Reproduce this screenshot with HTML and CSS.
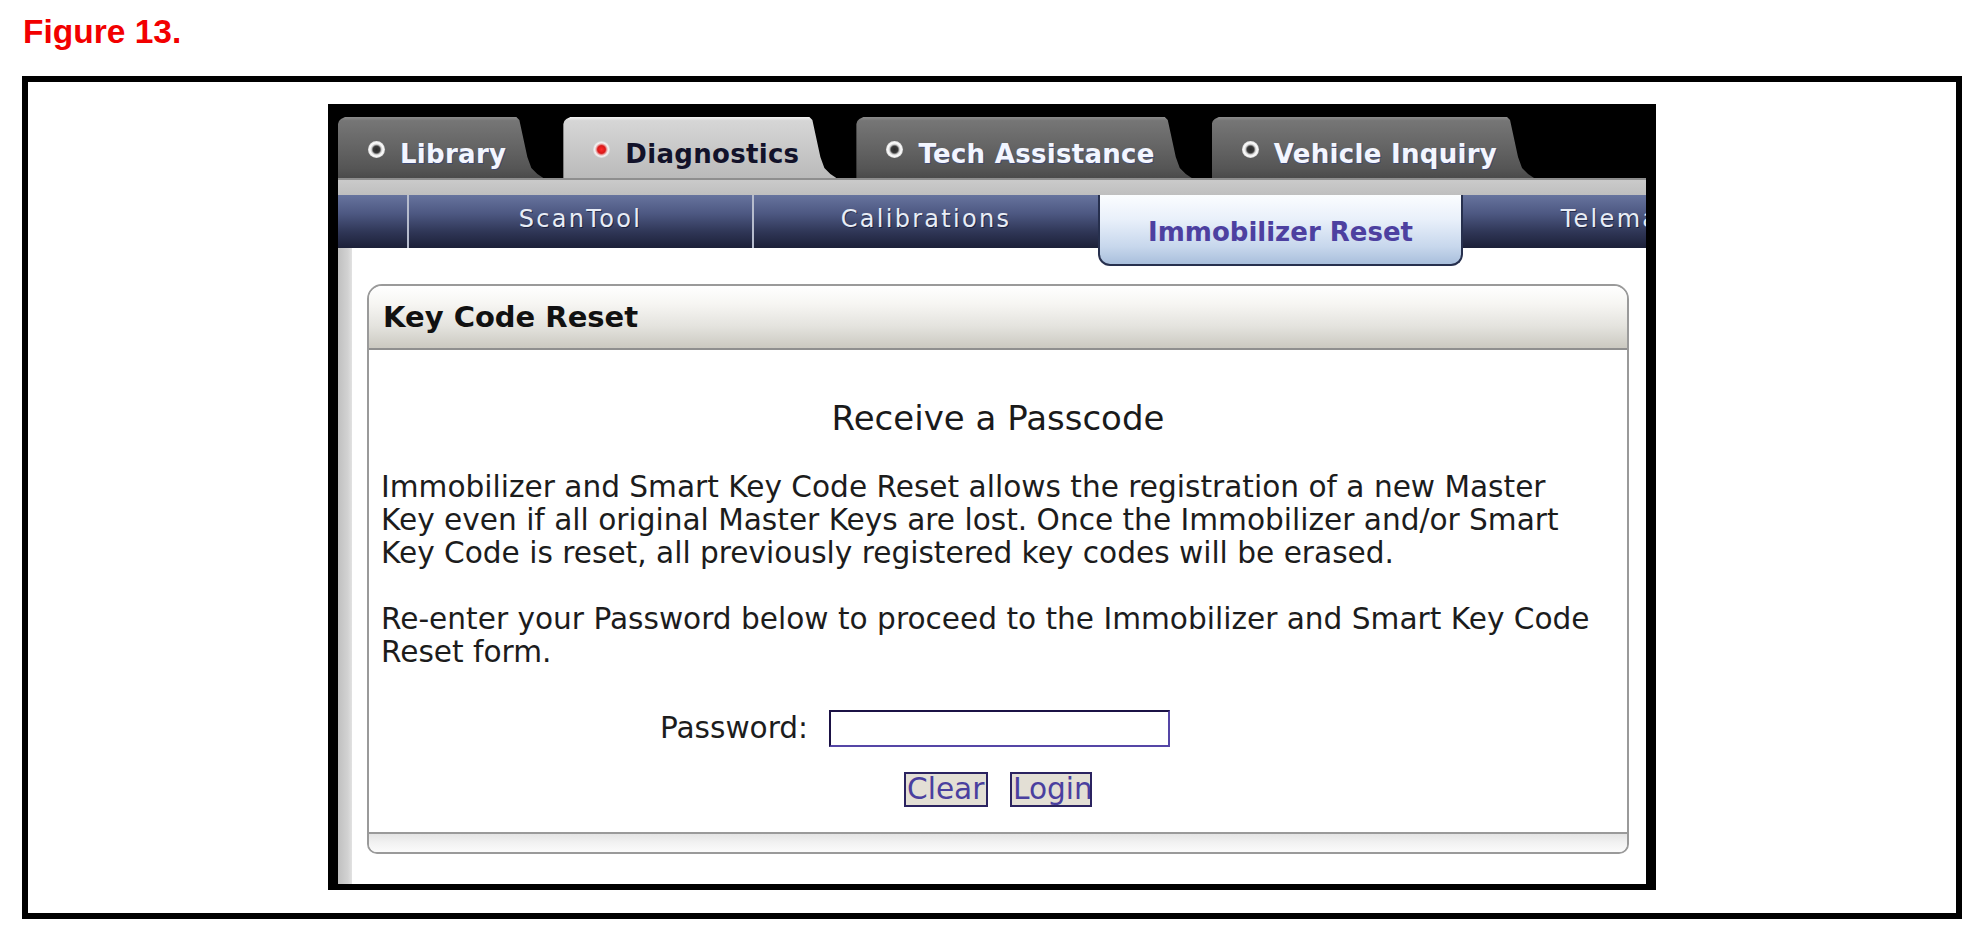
FILE: index.html
```html
<!DOCTYPE html>
<html lang="en">
<head>
<meta charset="utf-8">
<title>Figure 13 - Key Code Reset</title>
<link rel="stylesheet" href="styles.css">
</head>
<body>
<div class="fig-label">Figure 13.</div>
<div class="frame">
  <div class="screen">
    <div class="tabs">
      <div class="tab"><span class="dot"></span><span class="tab-label">Library</span></div>
      <div class="tab active"><span class="dot"></span><span class="tab-label">Diagnostics</span></div>
      <div class="tab"><span class="dot"></span><span class="tab-label">Tech Assistance</span></div>
      <div class="tab"><span class="dot"></span><span class="tab-label">Vehicle Inquiry</span></div>
    </div>
    <div class="screen-body">
      <div class="tab-rule"></div>
      <nav class="subnav">
        <div class="subnav-lead"></div>
        <div class="subnav-item">ScanTool</div>
        <div class="subnav-item wide">Calibrations</div>
        <div class="subnav-item current">Immobilizer Reset</div>
        <div class="subnav-item">Telematics</div>
      </nav>
      <div class="content">
        <div class="side-strip"></div>
        <div class="main">
          <section class="panel">
            <header class="panel-head">Key Code Reset</header>
            <div class="panel-body">
              <h2 class="panel-title">Receive a Passcode</h2>
              <p class="copy">Immobilizer and Smart Key Code Reset allows the registration of a new Master Key even if all original Master Keys are lost. Once the Immobilizer and/or Smart Key Code is reset, all previously registered key codes will be erased.</p>
              <p class="copy">Re-enter your Password below to proceed to the Immobilizer and Smart Key Code Reset form.</p>
              <div class="pw-row">
                <label class="pw-label" for="pw">Password:</label>
                <input class="pw-input" id="pw" type="password">
              </div>
              <div class="btn-row">
                <button class="btn btn-clear" type="button">Clear</button>
                <button class="btn btn-login" type="button">Login</button>
              </div>
            </div>
            <div class="panel-foot"></div>
          </section>
        </div>
      </div>
    </div>
  </div>
</div>
</body>
</html>
```

FILE: styles.css
```css
html, body {
  margin: 0;
  padding: 0;
  background: #ffffff;
}

body {
  font-family: "DejaVu Sans", Verdana, sans-serif;
  color: #1a1a1a;
}

.fig-label {
  font-family: "Liberation Sans", Arial, sans-serif;
  font-weight: bold;
  font-size: 33.5px;
  line-height: 33px;
  height: 33px;
  color: #f20000;
  padding: 15px 0 0 23px;
}

.frame {
  margin: 28px 15px 0 22px;
  border: 6px solid #000;
  padding: 22px 0 23px;
  display: flex;
  justify-content: center;
}

.screen {
  width: 1328px;
  box-sizing: border-box;
  background: #000;
  padding: 0 10px 6px;
}

/* ---------- top tabs ---------- */
.tabs {
  display: flex;
  gap: 20px;
  height: 74px;
  padding-top: 13px;
  box-sizing: border-box;
}

.tab {
  height: 61px;
  box-sizing: border-box;
  display: flex;
  align-items: flex-start;
  padding: 0 37px 0 30px;
  background: linear-gradient(#8c8c8c 0, #767676 6%, #626262 55%, #555 85%, #4a4a4a 100%);
  clip-path: polygon(0 7px, 1px 4px, 3px 2px, 7px 0, calc(100% - 27px) 0, calc(100% - 24px) 3px, calc(100% - 16px) 40px, calc(100% - 12px) 51px, calc(100% - 6px) 57px, 100% 61px, 0 61px);
  font-weight: bold;
  font-size: 26px;
  line-height: 30px;
  letter-spacing: 0.3px;
  color: #f3f6ff;
  text-shadow: 1px 1px 0 rgba(40, 60, 140, 0.55);
}

.tab.active {
  background: linear-gradient(#f4f4f4 0, #d6d6d6 6%, #c9c9c9 50%, #bababa 100%);
  color: #12122a;
  text-shadow: none;
}

.dot {
  flex: none;
  width: 17px;
  height: 17px;
  margin: 24px 15px 0 0;
  border-radius: 50%;
  background: radial-gradient(circle, #2a2a2a 0, #3a3a3a 28%, #d0d0d0 42%, #ffffff 55%, #b5b5b5 85%, #8a8a8a 100%);
}

.tab.active .dot {
  background: radial-gradient(circle, #ff2a2a 0, #d81818 32%, #e9a0a0 44%, #f4f4f4 56%, #bdbdbd 85%, #999 100%);
}

.tab-label {
  margin-top: 22px;
  white-space: nowrap;
}

/* ---------- sub navigation ---------- */
.screen-body {
  overflow: hidden;
}

.tab-rule {
  height: 17px;
  background: linear-gradient(#8e8e8e 0, #8e8e8e 2px, #cacaca 2px, #bfbfbf 100%);
}

.subnav {
  display: flex;
  align-items: flex-start;
  height: 53px;
  background: linear-gradient(#67749e 0, #4d5882 35%, #2f3656 70%, #1c2038 100%);
}

.subnav-lead {
  flex: none;
  width: 69px;
}

.subnav-item {
  flex: none;
  width: 345px;
  height: 53px;
  box-sizing: border-box;
  border-left: 2px solid #b6bccd;
  text-align: center;
  color: #e8edf6;
  font-size: 24px;
  letter-spacing: 2.3px;
  line-height: 48px;
  white-space: nowrap;
  text-shadow: 1px 1px 0 rgba(10, 15, 40, 0.6);
}

.subnav-item.wide {
  width: 346px;
}

.subnav-item.current {
  position: relative;
  z-index: 1;
  width: 365px;
  height: 71px;
  border: 2px solid #27304e;
  border-top: none;
  border-radius: 0 0 12px 12px;
  background: linear-gradient(#fbfdff 0, #e9f0fa 35%, #c7d7ec 75%, #a9bfdc 100%);
  color: #4d40a0;
  font-weight: bold;
  font-size: 26px;
  letter-spacing: 0;
  line-height: 30px;
  padding-top: 22px;
  text-shadow: none;
}

.subnav-item.current + .subnav-item {
  border-left: none;
}

/* ---------- content ---------- */
.content {
  display: flex;
  background: #fff;
}

.side-strip {
  flex: none;
  width: 14px;
  background: linear-gradient(to right, #c0c0c0, #d2d2d2 70%, #e2e2e2);
}

.main {
  flex: 1;
  padding: 36px 17px 30px 15px;
  background: #fff;
}

.panel {
  border: 2px solid #9a9a9a;
  border-radius: 15px 15px 10px 10px;
  overflow: hidden;
  background: #fff;
}

.panel-head {
  height: 62px;
  border-bottom: 2px solid #8f8f8f;
  background: linear-gradient(#ffffff 0, #f6f5f2 30%, #e4e3de 65%, #cbc9c1 100%);
  display: flex;
  align-items: center;
  padding-left: 14px;
  font-weight: bold;
  font-size: 29px;
  color: #111;
}

.panel-body {
  padding: 0 12px 25px;
}

.panel-title {
  margin: 48px 0 0;
  font-weight: normal;
  font-size: 34px;
  line-height: 40px;
  text-align: center;
  color: #1a1a1a;
}

.copy {
  margin: 33px 0 0;
  font-size: 29.6px;
  line-height: 33px;
  max-width: 41.35em;
  color: #1c1c1c;
}

.pw-row {
  display: flex;
  justify-content: center;
  align-items: center;
  gap: 21px;
  margin-top: 41px;
  padding-right: 166px;
}

.pw-label {
  font-size: 29.6px;
  line-height: 33px;
  color: #1c1c1c;
}

.pw-input {
  width: 341px;
  height: 37px;
  box-sizing: border-box;
  margin: 0;
  padding: 0;
  border: 2px solid;
  border-color: #1b1245 #5546a6 #5546a6 #1b1245;
  background: #fff;
}

.btn-row {
  display: flex;
  justify-content: center;
  gap: 22px;
  margin-top: 25px;
}

.btn {
  height: 35px;
  box-sizing: border-box;
  margin: 0;
  padding: 0 1px;
  border: 2px solid #2b2360;
  background: #e3dfd5;
  color: #4a3f9f;
  font-family: "DejaVu Sans", Verdana, sans-serif;
  font-size: 29.6px;
  line-height: 29px;
  text-align: left;
  overflow: hidden;
  white-space: nowrap;
}

.btn-clear {
  width: 84px;
}

.btn-login {
  width: 82px;
}

.panel-foot {
  height: 18px;
  border-top: 2px solid #9a9a9a;
  background: linear-gradient(#e4e4e4, #f2f2f2 50%, #fbfbfb);
}
```
